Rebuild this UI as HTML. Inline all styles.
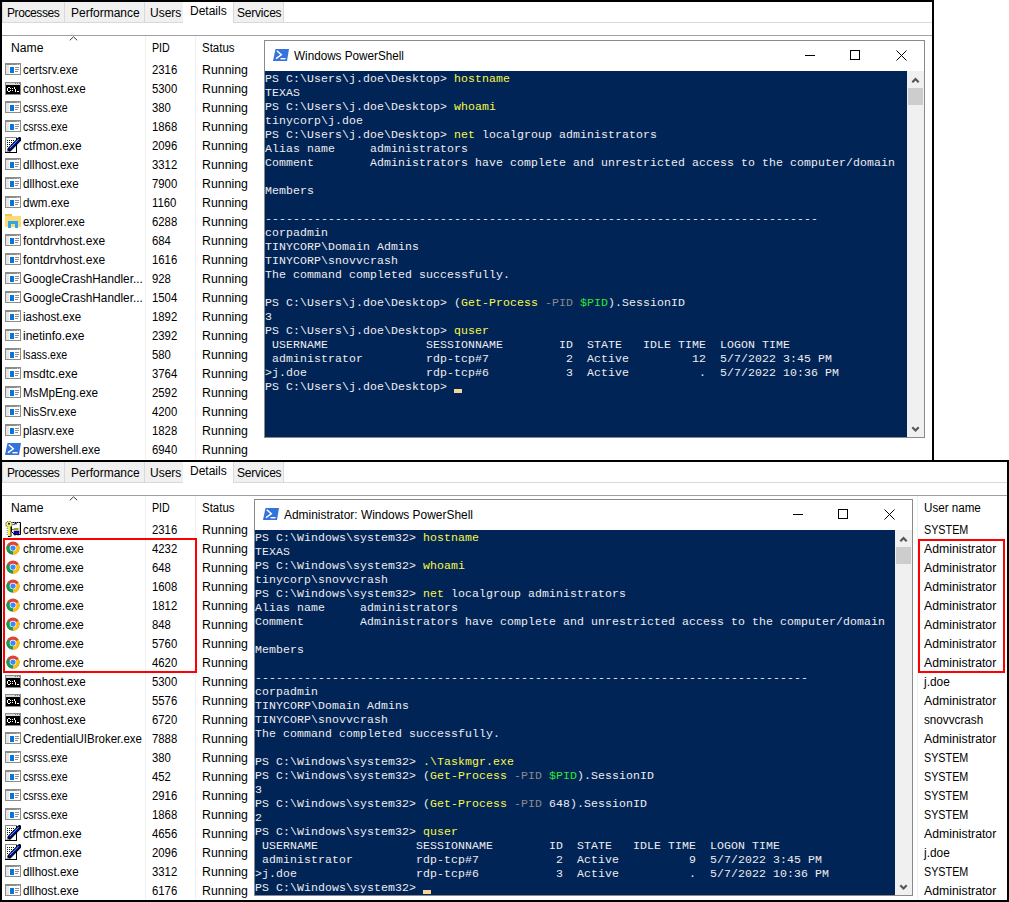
<!DOCTYPE html><html><head><meta charset="utf-8"><style>
html,body{margin:0;padding:0;background:#fff;width:1009px;height:902px;overflow:hidden;position:relative}
.t{position:absolute;font-family:"Liberation Sans", sans-serif;font-size:12px;line-height:19px;height:19px;color:#000;white-space:pre}
.m{position:absolute;left:0;font-family:"Liberation Mono", monospace;font-size:11.5px;letter-spacing:0.1px;line-height:14px;height:14px;color:#eeedf0;white-space:pre}
</style></head><body>

<svg width="0" height="0" style="position:absolute">
<defs>
<symbol id="iwin" viewBox="0 0 16 12">
  <rect x="0" y="0" width="16" height="12" fill="#8c8c8c"/>
  <rect x="1" y="1" width="14" height="10" fill="#fff"/>
  <rect x="1" y="1" width="14" height="1" fill="#8c8c8c"/>
  <rect x="12" y="1" width="1" height="1" fill="#c8c8c8"/><rect x="14" y="1" width="1" height="1" fill="#c8c8c8"/>
  <rect x="1" y="2" width="3" height="9" fill="#e6e6e6"/>
  <rect x="5" y="4" width="4" height="6" fill="#0a74da"/>
  <rect x="10" y="4" width="4" height="1" fill="#8f8f8f"/>
  <rect x="10" y="6" width="4" height="1" fill="#8f8f8f"/>
  <rect x="10" y="8" width="3" height="1" fill="#8f8f8f"/>
</symbol>
<symbol id="icon" viewBox="0 0 16 13">
  <rect x="0" y="0" width="16" height="13" fill="#8c8c8c"/>
  <rect x="1" y="1" width="14" height="2" fill="#d8d8de"/>
  <rect x="10" y="1" width="1" height="1" fill="#777"/><rect x="12" y="1" width="1" height="1" fill="#777"/><rect x="14" y="1" width="1" height="1" fill="#777"/>
  <rect x="1" y="3" width="14" height="9" fill="#000"/>
  <g fill="#fff">
  <rect x="2" y="6" width="1" height="3"/><rect x="3" y="5" width="2" height="1"/><rect x="3" y="9" width="2" height="1"/>
  <rect x="5" y="6" width="1" height="1"/><rect x="5" y="8" width="1" height="1"/>
  <rect x="7" y="6" width="1" height="1"/><rect x="7" y="8" width="1" height="1"/>
  <rect x="9" y="5" width="1" height="2"/><rect x="10" y="7" width="1" height="3"/>
  <rect x="12" y="9" width="2" height="1"/>
  </g>
</symbol>
<symbol id="ips" viewBox="0 0 16 12">
  <path d="M2.5 0 H16 L14 12 H0 Z" fill="#3573dc"/>
  <path d="M3.8 1.8 L8.3 5.8 L3 9.6" fill="none" stroke="#fff" stroke-width="1.5"/>
  <rect x="7.5" y="9" width="5" height="1.4" fill="#fff"/>
</symbol>
<symbol id="ictf" viewBox="0 0 16 16">
  <rect x="0" y="0" width="12" height="16" fill="#000"/>
  <rect x="0" y="0" width="12" height="1" fill="#8a8a8a"/>
  <rect x="0" y="0" width="1" height="15" fill="#8a8a8a"/>
  <rect x="1" y="1" width="10" height="14" fill="#fff"/>
  <g fill="#111">
  <rect x="2" y="3" width="1" height="1"/><rect x="4" y="3" width="1" height="1"/><rect x="6" y="3" width="1" height="1"/><rect x="8" y="3" width="1" height="1"/>
  <rect x="2" y="5" width="1" height="1"/><rect x="4" y="5" width="1" height="1"/><rect x="6" y="5" width="1" height="1"/><rect x="8" y="5" width="1" height="1"/>
  <rect x="2" y="7" width="1" height="1"/><rect x="4" y="7" width="1" height="1"/><rect x="6" y="7" width="1" height="1"/>
  <rect x="2" y="9" width="1" height="1"/>
  </g>
  <path d="M4.5 12.5 L14.5 2.2" stroke="#000" stroke-width="4.2" stroke-linecap="round"/>
  <path d="M4.3 12.2 L14.2 2" stroke="#0a0a9a" stroke-width="2.8"/>
  <path d="M4.8 11.2 L13.6 2.2" stroke="#3cc8f0" stroke-width="0.9"/>
  <path d="M1 15 L3.5 13 L4 14 Z" fill="#222"/>
</symbol>
<symbol id="ifold" viewBox="0 0 16 16">
  <rect x="0" y="1" width="7" height="3" fill="#f1c644"/>
  <rect x="0" y="3" width="16" height="11" fill="#fbd978"/>
  <path d="M3 8 H13 V15 H10 V11 H6 V15 H3 Z" fill="#2ba6e6"/>
</symbol>
<symbol id="ichr" viewBox="0 0 16 16">
  <circle cx="8" cy="8" r="7.5" fill="#db4437"/>
  <path d="M8 8 L14.5 4.25 A7.5 7.5 0 0 1 8 15.5 Z" fill="#f4c20d"/>
  <path d="M8 8 L8 15.5 A7.5 7.5 0 0 1 1.5 4.25 Z" fill="#0f9d58"/>
  <circle cx="8" cy="8" r="3.8" fill="#fff"/>
  <circle cx="8" cy="8" r="3" fill="#4285f4"/>
</symbol>
<symbol id="icert" viewBox="0 0 16 16">
  <path d="M6.5 1.5 H15.5 V13.5 H9.5 L6.5 10.5 Z" fill="#fff" stroke="#000" stroke-width="1"/>
  <path d="M7 1.5 H15" stroke="#777" stroke-width="1" stroke-dasharray="1 1"/>
  <rect x="14" y="3" width="1" height="9" fill="#d8d890"/>
  <rect x="9" y="7" width="4.5" height="2" fill="#a0a020"/>
  <path d="M9 10 H14 V14 H12.5 V12.5 H11 V14 H9 Z" fill="#0000e0" stroke="#000" stroke-width="0.6"/>
  <path d="M8.5 4 Q10 2 12 3" stroke="#1a1a9a" stroke-width="1.2" fill="none"/>
  <circle cx="8" cy="8.5" r="0.7" fill="#111"/>
  <circle cx="4" cy="3.2" r="3.2" fill="#f2f07a" stroke="#222" stroke-width="0.9" stroke-dasharray="1 0.6"/>
  <rect x="2.8" y="6" width="2.8" height="9.5" fill="#f5f050"/>
  <path d="M6 6 V15.5" stroke="#000" stroke-width="1"/>
  <path d="M2.2 7 V14" stroke="#555" stroke-width="0.8" stroke-dasharray="1 1"/>
  <path d="M3 15.5 H5.5" stroke="#000" stroke-width="1"/>
  <circle cx="4" cy="2.8" r="1" fill="#111"/>
</symbol>
</defs>
</svg>

<div style="position:absolute;left:2px;top:2px;width:931px;height:20px;background:#fff"></div>
<div style="position:absolute;left:2px;top:2px;width:63px;height:21px;background:#f0f0f0;border:1px solid #d9d9d9;border-top:0;box-sizing:border-box"></div>
<div class="t" style="left:7px;top:4px;letter-spacing:-0.4px">Processes</div>
<div style="position:absolute;left:64px;top:2px;width:81px;height:21px;background:#f0f0f0;border:1px solid #d9d9d9;border-top:0;box-sizing:border-box"></div>
<div class="t" style="left:71px;top:4px;letter-spacing:0">Performance</div>
<div style="position:absolute;left:144px;top:2px;width:40px;height:21px;background:#f0f0f0;border:1px solid #d9d9d9;border-top:0;box-sizing:border-box"></div>
<div class="t" style="left:150px;top:4px;letter-spacing:0">Users</div>
<div style="position:absolute;left:183px;top:2px;width:50px;height:21px;background:#fff"></div>
<div class="t" style="left:190px;top:2px">Details</div>
<div style="position:absolute;left:233px;top:2px;width:51px;height:21px;background:#f0f0f0;border:1px solid #d9d9d9;border-top:0;box-sizing:border-box"></div>
<div class="t" style="left:237px;top:4px;letter-spacing:-0.2px">Services</div>
<div style="position:absolute;left:283px;top:22px;width:650px;height:1px;background:#d9d9d9"></div>
<div style="position:absolute;left:2px;top:22px;width:181px;height:1px;background:#d9d9d9"></div>
<div style="position:absolute;left:2px;top:35px;width:931px;height:1px;background:#a0a0a0"></div>
<div style="position:absolute;left:145px;top:36px;width:1px;height:424px;background:#f0f0f3"></div>
<div style="position:absolute;left:195px;top:36px;width:1px;height:424px;background:#f0f0f3"></div>
<svg style="position:absolute;left:69px;top:36px" width="9" height="5"><path d="M0.8 4.3 L4.5 0.8 L8.2 4.3" fill="none" stroke="#3a3a3a" stroke-width="1"/></svg>
<div class="t" style="left:11px;top:39px;transform:scaleX(1.0129);transform-origin:0 0;">Name</div>
<div class="t" style="left:152px;top:39px;transform:scaleX(0.8895);transform-origin:0 0;">PID</div>
<div class="t" style="left:202px;top:39px;transform:scaleX(0.9576);transform-origin:0 0;">Status</div>
<svg style="position:absolute;left:5px;top:63px" width="16" height="12"><use href="#iwin" width="16" height="12"/></svg>
<div class="t" style="left:23px;top:61px;transform:scaleX(0.9474);transform-origin:0 0;">certsrv.exe</div>
<div class="t" style="left:152px;top:61px;transform:scaleX(0.9440);transform-origin:0 0;">2316</div>
<div class="t" style="left:201.5px;top:61px;transform:scaleX(1.0279);transform-origin:0 0;">Running</div>
<svg style="position:absolute;left:5px;top:82px" width="16" height="13"><use href="#icon" width="16" height="13"/></svg>
<div class="t" style="left:23px;top:80px;transform:scaleX(0.9672);transform-origin:0 0;">conhost.exe</div>
<div class="t" style="left:152px;top:80px;transform:scaleX(0.9440);transform-origin:0 0;">5300</div>
<div class="t" style="left:201.5px;top:80px;transform:scaleX(1.0279);transform-origin:0 0;">Running</div>
<svg style="position:absolute;left:5px;top:101px" width="16" height="12"><use href="#iwin" width="16" height="12"/></svg>
<div class="t" style="left:23px;top:99px;transform:scaleX(0.8820);transform-origin:0 0;">csrss.exe</div>
<div class="t" style="left:152px;top:99px;transform:scaleX(0.9440);transform-origin:0 0;">380</div>
<div class="t" style="left:201.5px;top:99px;transform:scaleX(1.0279);transform-origin:0 0;">Running</div>
<svg style="position:absolute;left:5px;top:120px" width="16" height="12"><use href="#iwin" width="16" height="12"/></svg>
<div class="t" style="left:23px;top:118px;transform:scaleX(0.8820);transform-origin:0 0;">csrss.exe</div>
<div class="t" style="left:152px;top:118px;transform:scaleX(0.9440);transform-origin:0 0;">1868</div>
<div class="t" style="left:201.5px;top:118px;transform:scaleX(1.0279);transform-origin:0 0;">Running</div>
<svg style="position:absolute;left:5px;top:137px" width="16" height="16"><use href="#ictf" width="16" height="16"/></svg>
<div class="t" style="left:23px;top:137px;">ctfmon.exe</div>
<div class="t" style="left:152px;top:137px;transform:scaleX(0.9440);transform-origin:0 0;">2096</div>
<div class="t" style="left:201.5px;top:137px;transform:scaleX(1.0279);transform-origin:0 0;">Running</div>
<svg style="position:absolute;left:5px;top:158px" width="16" height="12"><use href="#iwin" width="16" height="12"/></svg>
<div class="t" style="left:23px;top:156px;transform:scaleX(0.9702);transform-origin:0 0;">dllhost.exe</div>
<div class="t" style="left:152px;top:156px;transform:scaleX(0.9440);transform-origin:0 0;">3312</div>
<div class="t" style="left:201.5px;top:156px;transform:scaleX(1.0279);transform-origin:0 0;">Running</div>
<svg style="position:absolute;left:5px;top:177px" width="16" height="12"><use href="#iwin" width="16" height="12"/></svg>
<div class="t" style="left:23px;top:175px;transform:scaleX(0.9702);transform-origin:0 0;">dllhost.exe</div>
<div class="t" style="left:152px;top:175px;transform:scaleX(0.9440);transform-origin:0 0;">7900</div>
<div class="t" style="left:201.5px;top:175px;transform:scaleX(1.0279);transform-origin:0 0;">Running</div>
<svg style="position:absolute;left:5px;top:196px" width="16" height="12"><use href="#iwin" width="16" height="12"/></svg>
<div class="t" style="left:23px;top:194px;transform:scaleX(0.9667);transform-origin:0 0;">dwm.exe</div>
<div class="t" style="left:152px;top:194px;transform:scaleX(0.9440);transform-origin:0 0;">1160</div>
<div class="t" style="left:201.5px;top:194px;transform:scaleX(1.0279);transform-origin:0 0;">Running</div>
<svg style="position:absolute;left:5px;top:213px" width="16" height="16"><use href="#ifold" width="16" height="16"/></svg>
<div class="t" style="left:23px;top:213px;transform:scaleX(0.9462);transform-origin:0 0;">explorer.exe</div>
<div class="t" style="left:152px;top:213px;transform:scaleX(0.9440);transform-origin:0 0;">6288</div>
<div class="t" style="left:201.5px;top:213px;transform:scaleX(1.0279);transform-origin:0 0;">Running</div>
<svg style="position:absolute;left:5px;top:234px" width="16" height="12"><use href="#iwin" width="16" height="12"/></svg>
<div class="t" style="left:23px;top:232px;">fontdrvhost.exe</div>
<div class="t" style="left:152px;top:232px;transform:scaleX(0.9440);transform-origin:0 0;">684</div>
<div class="t" style="left:201.5px;top:232px;transform:scaleX(1.0279);transform-origin:0 0;">Running</div>
<svg style="position:absolute;left:5px;top:253px" width="16" height="12"><use href="#iwin" width="16" height="12"/></svg>
<div class="t" style="left:23px;top:251px;">fontdrvhost.exe</div>
<div class="t" style="left:152px;top:251px;transform:scaleX(0.9440);transform-origin:0 0;">1616</div>
<div class="t" style="left:201.5px;top:251px;transform:scaleX(1.0279);transform-origin:0 0;">Running</div>
<svg style="position:absolute;left:5px;top:272px" width="16" height="12"><use href="#iwin" width="16" height="12"/></svg>
<div class="t" style="left:23px;top:270px;transform:scaleX(0.9808);transform-origin:0 0;">GoogleCrashHandler...</div>
<div class="t" style="left:152px;top:270px;transform:scaleX(0.9440);transform-origin:0 0;">928</div>
<div class="t" style="left:201.5px;top:270px;transform:scaleX(1.0279);transform-origin:0 0;">Running</div>
<svg style="position:absolute;left:5px;top:291px" width="16" height="12"><use href="#iwin" width="16" height="12"/></svg>
<div class="t" style="left:23px;top:289px;transform:scaleX(0.9808);transform-origin:0 0;">GoogleCrashHandler...</div>
<div class="t" style="left:152px;top:289px;transform:scaleX(0.9440);transform-origin:0 0;">1504</div>
<div class="t" style="left:201.5px;top:289px;transform:scaleX(1.0279);transform-origin:0 0;">Running</div>
<svg style="position:absolute;left:5px;top:310px" width="16" height="12"><use href="#iwin" width="16" height="12"/></svg>
<div class="t" style="left:23px;top:308px;transform:scaleX(0.9576);transform-origin:0 0;">iashost.exe</div>
<div class="t" style="left:152px;top:308px;transform:scaleX(0.9440);transform-origin:0 0;">1892</div>
<div class="t" style="left:201.5px;top:308px;transform:scaleX(1.0279);transform-origin:0 0;">Running</div>
<svg style="position:absolute;left:5px;top:329px" width="16" height="12"><use href="#iwin" width="16" height="12"/></svg>
<div class="t" style="left:23px;top:327px;">inetinfo.exe</div>
<div class="t" style="left:152px;top:327px;transform:scaleX(0.9440);transform-origin:0 0;">2392</div>
<div class="t" style="left:201.5px;top:327px;transform:scaleX(1.0279);transform-origin:0 0;">Running</div>
<svg style="position:absolute;left:5px;top:348px" width="16" height="12"><use href="#iwin" width="16" height="12"/></svg>
<div class="t" style="left:23px;top:346px;transform:scaleX(0.8837);transform-origin:0 0;">lsass.exe</div>
<div class="t" style="left:152px;top:346px;transform:scaleX(0.9440);transform-origin:0 0;">580</div>
<div class="t" style="left:201.5px;top:346px;transform:scaleX(1.0279);transform-origin:0 0;">Running</div>
<svg style="position:absolute;left:5px;top:367px" width="16" height="12"><use href="#iwin" width="16" height="12"/></svg>
<div class="t" style="left:23px;top:365px;">msdtc.exe</div>
<div class="t" style="left:152px;top:365px;transform:scaleX(0.9440);transform-origin:0 0;">3764</div>
<div class="t" style="left:201.5px;top:365px;transform:scaleX(1.0279);transform-origin:0 0;">Running</div>
<svg style="position:absolute;left:5px;top:386px" width="16" height="12"><use href="#iwin" width="16" height="12"/></svg>
<div class="t" style="left:23px;top:384px;transform:scaleX(0.9787);transform-origin:0 0;">MsMpEng.exe</div>
<div class="t" style="left:152px;top:384px;transform:scaleX(0.9440);transform-origin:0 0;">2592</div>
<div class="t" style="left:201.5px;top:384px;transform:scaleX(1.0279);transform-origin:0 0;">Running</div>
<svg style="position:absolute;left:5px;top:405px" width="16" height="12"><use href="#iwin" width="16" height="12"/></svg>
<div class="t" style="left:23px;top:403px;transform:scaleX(0.9357);transform-origin:0 0;">NisSrv.exe</div>
<div class="t" style="left:152px;top:403px;transform:scaleX(0.9440);transform-origin:0 0;">4200</div>
<div class="t" style="left:201.5px;top:403px;transform:scaleX(1.0279);transform-origin:0 0;">Running</div>
<svg style="position:absolute;left:5px;top:424px" width="16" height="12"><use href="#iwin" width="16" height="12"/></svg>
<div class="t" style="left:23px;top:422px;transform:scaleX(0.9509);transform-origin:0 0;">plasrv.exe</div>
<div class="t" style="left:152px;top:422px;transform:scaleX(0.9440);transform-origin:0 0;">1828</div>
<div class="t" style="left:201.5px;top:422px;transform:scaleX(1.0279);transform-origin:0 0;">Running</div>
<svg style="position:absolute;left:5px;top:443px" width="16" height="12"><use href="#ips" width="16" height="12"/></svg>
<div class="t" style="left:23px;top:441px;transform:scaleX(0.9646);transform-origin:0 0;">powershell.exe</div>
<div class="t" style="left:152px;top:441px;transform:scaleX(0.9440);transform-origin:0 0;">6940</div>
<div class="t" style="left:201.5px;top:441px;transform:scaleX(1.0279);transform-origin:0 0;">Running</div>
<div style="position:absolute;left:264px;top:40px;width:661px;height:398px;box-sizing:border-box;border:1px solid #8a8a8a;background:#fff"></div>
<div style="position:absolute;left:265px;top:71px;width:642px;height:366px;background:#012456;overflow:hidden">
<div class="m" style="top:1px">PS C:\Users\j.doe\Desktop&gt; <span style="color:#f8f848">hostname</span></div>
<div class="m" style="top:15px">TEXAS</div>
<div class="m" style="top:29px">PS C:\Users\j.doe\Desktop&gt; <span style="color:#f8f848">whoami</span></div>
<div class="m" style="top:43px">tinycorp\j.doe</div>
<div class="m" style="top:57px">PS C:\Users\j.doe\Desktop&gt; <span style="color:#f8f848">net</span> localgroup administrators</div>
<div class="m" style="top:71px">Alias name     administrators</div>
<div class="m" style="top:85px">Comment        Administrators have complete and unrestricted access to the computer/domain</div>
<div class="m" style="top:99px"></div>
<div class="m" style="top:113px">Members</div>
<div class="m" style="top:127px"></div>
<div class="m" style="top:141px">-------------------------------------------------------------------------------</div>
<div class="m" style="top:155px">corpadmin</div>
<div class="m" style="top:169px">TINYCORP\Domain Admins</div>
<div class="m" style="top:183px">TINYCORP\snovvcrash</div>
<div class="m" style="top:197px">The command completed successfully.</div>
<div class="m" style="top:211px"></div>
<div class="m" style="top:225px">PS C:\Users\j.doe\Desktop&gt; (<span style="color:#f8f848">Get-Process</span> <span style="color:#8a8a8a">-PID</span> <span style="color:#2ee82e">$PID</span>).SessionID</div>
<div class="m" style="top:239px">3</div>
<div class="m" style="top:253px">PS C:\Users\j.doe\Desktop&gt; <span style="color:#f8f848">quser</span></div>
<div class="m" style="top:267px"> USERNAME              SESSIONNAME        ID  STATE   IDLE TIME  LOGON TIME</div>
<div class="m" style="top:281px"> administrator         rdp-tcp#7           2  Active         12  5/7/2022 3:45 PM</div>
<div class="m" style="top:295px">&gt;j.doe                 rdp-tcp#6           3  Active          .  5/7/2022 10:36 PM</div>
<div class="m" style="top:309px">PS C:\Users\j.doe\Desktop&gt; <span style="display:inline-block;width:8px;height:4px;background:#f6d49a;vertical-align:-3px"></span></div>
</div>
<div style="position:absolute;left:907px;top:71px;width:17px;height:366px;background:#f0f0f0"></div>
<svg style="position:absolute;left:911px;top:77px" width="9" height="6"><path d="M1.3 5.3 L4.5 2.1 L7.7 5.3" fill="none" stroke="#555" stroke-width="2.1"/></svg>
<div style="position:absolute;left:908px;top:88px;width:15px;height:17px;background:#cdcdcd"></div>
<svg style="position:absolute;left:911px;top:426px" width="9" height="7"><path d="M1.3 1.2 L4.5 4.4 L7.7 1.2" fill="none" stroke="#555" stroke-width="2.1"/></svg>
<svg style="position:absolute;left:273px;top:49px" width="16" height="12"><use href="#ips" width="16" height="12"/></svg>
<div class="t" style="left:294px;top:46px;height:21px;line-height:21px;transform:scaleX(0.9750);transform-origin:0 0">Windows PowerShell</div>
<div style="position:absolute;left:805px;top:55px;width:10px;height:1px;background:#000"></div>
<div style="position:absolute;left:850px;top:50px;width:10px;height:10px;box-sizing:border-box;border:1px solid #000"></div>
<svg style="position:absolute;left:896px;top:50px" width="11" height="11"><path d="M0.5 0.5 L10.5 10.5 M10.5 0.5 L0.5 10.5" stroke="#000" stroke-width="1"/></svg>
<div style="position:absolute;left:0;top:0;width:934px;height:2px;background:#000"></div>
<div style="position:absolute;left:0;top:0;width:2px;height:461px;background:#000"></div>
<div style="position:absolute;left:932px;top:0;width:2px;height:461px;background:#000"></div>
<div style="position:absolute;left:934px;top:0;width:75px;height:460px;background:#fff"></div>
<div style="position:absolute;left:0;top:460px;width:1009px;height:442px;background:#fff"></div>
<div style="position:absolute;left:2px;top:462px;width:1005px;height:20px;background:#fff"></div>
<div style="position:absolute;left:2px;top:462px;width:63px;height:21px;background:#f0f0f0;border:1px solid #d9d9d9;border-top:0;box-sizing:border-box"></div>
<div class="t" style="left:7px;top:464px;letter-spacing:-0.4px">Processes</div>
<div style="position:absolute;left:64px;top:462px;width:81px;height:21px;background:#f0f0f0;border:1px solid #d9d9d9;border-top:0;box-sizing:border-box"></div>
<div class="t" style="left:71px;top:464px;letter-spacing:0">Performance</div>
<div style="position:absolute;left:144px;top:462px;width:40px;height:21px;background:#f0f0f0;border:1px solid #d9d9d9;border-top:0;box-sizing:border-box"></div>
<div class="t" style="left:150px;top:464px;letter-spacing:0">Users</div>
<div style="position:absolute;left:183px;top:462px;width:50px;height:21px;background:#fff"></div>
<div class="t" style="left:190px;top:462px">Details</div>
<div style="position:absolute;left:233px;top:462px;width:51px;height:21px;background:#f0f0f0;border:1px solid #d9d9d9;border-top:0;box-sizing:border-box"></div>
<div class="t" style="left:237px;top:464px;letter-spacing:-0.2px">Services</div>
<div style="position:absolute;left:283px;top:482px;width:724px;height:1px;background:#d9d9d9"></div>
<div style="position:absolute;left:2px;top:482px;width:181px;height:1px;background:#d9d9d9"></div>
<div style="position:absolute;left:2px;top:495px;width:1005px;height:1px;background:#a0a0a0"></div>
<div style="position:absolute;left:145px;top:496px;width:1px;height:404px;background:#f0f0f3"></div>
<div style="position:absolute;left:195px;top:496px;width:1px;height:404px;background:#f0f0f3"></div>
<div style="position:absolute;left:917px;top:496px;width:1px;height:404px;background:#f0f0f3"></div>
<svg style="position:absolute;left:69px;top:496px" width="9" height="5"><path d="M0.8 4.3 L4.5 0.8 L8.2 4.3" fill="none" stroke="#3a3a3a" stroke-width="1"/></svg>
<div class="t" style="left:11px;top:499px;transform:scaleX(1.0129);transform-origin:0 0;">Name</div>
<div class="t" style="left:152px;top:499px;transform:scaleX(0.8895);transform-origin:0 0;">PID</div>
<div class="t" style="left:202px;top:499px;transform:scaleX(0.9576);transform-origin:0 0;">Status</div>
<div class="t" style="left:924px;top:499px;transform:scaleX(0.9684);transform-origin:0 0;">User name</div>
<svg style="position:absolute;left:5px;top:521px" width="16" height="16"><use href="#icert" width="16" height="16"/></svg>
<div class="t" style="left:23px;top:521px;transform:scaleX(0.9474);transform-origin:0 0;">certsrv.exe</div>
<div class="t" style="left:152px;top:521px;transform:scaleX(0.9440);transform-origin:0 0;">2316</div>
<div class="t" style="left:201.5px;top:521px;transform:scaleX(1.0279);transform-origin:0 0;">Running</div>
<div class="t" style="left:924px;top:521px;transform:scaleX(0.8979);transform-origin:0 0;">SYSTEM</div>
<svg style="position:absolute;left:6px;top:541px" width="14" height="14"><use href="#ichr" width="14" height="14"/></svg>
<div class="t" style="left:23px;top:540px;transform:scaleX(0.9677);transform-origin:0 0;">chrome.exe</div>
<div class="t" style="left:152px;top:540px;transform:scaleX(0.9440);transform-origin:0 0;">4232</div>
<div class="t" style="left:201.5px;top:540px;transform:scaleX(1.0279);transform-origin:0 0;">Running</div>
<div class="t" style="left:924px;top:540px;transform:scaleX(1.0225);transform-origin:0 0;">Administrator</div>
<svg style="position:absolute;left:6px;top:560px" width="14" height="14"><use href="#ichr" width="14" height="14"/></svg>
<div class="t" style="left:23px;top:559px;transform:scaleX(0.9677);transform-origin:0 0;">chrome.exe</div>
<div class="t" style="left:152px;top:559px;transform:scaleX(0.9440);transform-origin:0 0;">648</div>
<div class="t" style="left:201.5px;top:559px;transform:scaleX(1.0279);transform-origin:0 0;">Running</div>
<div class="t" style="left:924px;top:559px;transform:scaleX(1.0225);transform-origin:0 0;">Administrator</div>
<svg style="position:absolute;left:6px;top:579px" width="14" height="14"><use href="#ichr" width="14" height="14"/></svg>
<div class="t" style="left:23px;top:578px;transform:scaleX(0.9677);transform-origin:0 0;">chrome.exe</div>
<div class="t" style="left:152px;top:578px;transform:scaleX(0.9440);transform-origin:0 0;">1608</div>
<div class="t" style="left:201.5px;top:578px;transform:scaleX(1.0279);transform-origin:0 0;">Running</div>
<div class="t" style="left:924px;top:578px;transform:scaleX(1.0225);transform-origin:0 0;">Administrator</div>
<svg style="position:absolute;left:6px;top:598px" width="14" height="14"><use href="#ichr" width="14" height="14"/></svg>
<div class="t" style="left:23px;top:597px;transform:scaleX(0.9677);transform-origin:0 0;">chrome.exe</div>
<div class="t" style="left:152px;top:597px;transform:scaleX(0.9440);transform-origin:0 0;">1812</div>
<div class="t" style="left:201.5px;top:597px;transform:scaleX(1.0279);transform-origin:0 0;">Running</div>
<div class="t" style="left:924px;top:597px;transform:scaleX(1.0225);transform-origin:0 0;">Administrator</div>
<svg style="position:absolute;left:6px;top:617px" width="14" height="14"><use href="#ichr" width="14" height="14"/></svg>
<div class="t" style="left:23px;top:616px;transform:scaleX(0.9677);transform-origin:0 0;">chrome.exe</div>
<div class="t" style="left:152px;top:616px;transform:scaleX(0.9440);transform-origin:0 0;">848</div>
<div class="t" style="left:201.5px;top:616px;transform:scaleX(1.0279);transform-origin:0 0;">Running</div>
<div class="t" style="left:924px;top:616px;transform:scaleX(1.0225);transform-origin:0 0;">Administrator</div>
<svg style="position:absolute;left:6px;top:636px" width="14" height="14"><use href="#ichr" width="14" height="14"/></svg>
<div class="t" style="left:23px;top:635px;transform:scaleX(0.9677);transform-origin:0 0;">chrome.exe</div>
<div class="t" style="left:152px;top:635px;transform:scaleX(0.9440);transform-origin:0 0;">5760</div>
<div class="t" style="left:201.5px;top:635px;transform:scaleX(1.0279);transform-origin:0 0;">Running</div>
<div class="t" style="left:924px;top:635px;transform:scaleX(1.0225);transform-origin:0 0;">Administrator</div>
<svg style="position:absolute;left:6px;top:655px" width="14" height="14"><use href="#ichr" width="14" height="14"/></svg>
<div class="t" style="left:23px;top:654px;transform:scaleX(0.9677);transform-origin:0 0;">chrome.exe</div>
<div class="t" style="left:152px;top:654px;transform:scaleX(0.9440);transform-origin:0 0;">4620</div>
<div class="t" style="left:201.5px;top:654px;transform:scaleX(1.0279);transform-origin:0 0;">Running</div>
<div class="t" style="left:924px;top:654px;transform:scaleX(1.0225);transform-origin:0 0;">Administrator</div>
<svg style="position:absolute;left:5px;top:675px" width="16" height="13"><use href="#icon" width="16" height="13"/></svg>
<div class="t" style="left:23px;top:673px;transform:scaleX(0.9672);transform-origin:0 0;">conhost.exe</div>
<div class="t" style="left:152px;top:673px;transform:scaleX(0.9440);transform-origin:0 0;">5300</div>
<div class="t" style="left:201.5px;top:673px;transform:scaleX(1.0279);transform-origin:0 0;">Running</div>
<div class="t" style="left:924px;top:673px;transform:scaleX(0.9885);transform-origin:0 0;">j.doe</div>
<svg style="position:absolute;left:5px;top:694px" width="16" height="13"><use href="#icon" width="16" height="13"/></svg>
<div class="t" style="left:23px;top:692px;transform:scaleX(0.9672);transform-origin:0 0;">conhost.exe</div>
<div class="t" style="left:152px;top:692px;transform:scaleX(0.9440);transform-origin:0 0;">5576</div>
<div class="t" style="left:201.5px;top:692px;transform:scaleX(1.0279);transform-origin:0 0;">Running</div>
<div class="t" style="left:924px;top:692px;transform:scaleX(1.0225);transform-origin:0 0;">Administrator</div>
<svg style="position:absolute;left:5px;top:713px" width="16" height="13"><use href="#icon" width="16" height="13"/></svg>
<div class="t" style="left:23px;top:711px;transform:scaleX(0.9672);transform-origin:0 0;">conhost.exe</div>
<div class="t" style="left:152px;top:711px;transform:scaleX(0.9440);transform-origin:0 0;">6720</div>
<div class="t" style="left:201.5px;top:711px;transform:scaleX(1.0279);transform-origin:0 0;">Running</div>
<div class="t" style="left:924px;top:711px;transform:scaleX(0.9750);transform-origin:0 0;">snovvcrash</div>
<svg style="position:absolute;left:5px;top:732px" width="16" height="12"><use href="#iwin" width="16" height="12"/></svg>
<div class="t" style="left:23px;top:730px;transform:scaleX(0.9593);transform-origin:0 0;">CredentialUIBroker.exe</div>
<div class="t" style="left:152px;top:730px;transform:scaleX(0.9440);transform-origin:0 0;">7888</div>
<div class="t" style="left:201.5px;top:730px;transform:scaleX(1.0279);transform-origin:0 0;">Running</div>
<div class="t" style="left:924px;top:730px;transform:scaleX(1.0225);transform-origin:0 0;">Administrator</div>
<svg style="position:absolute;left:5px;top:751px" width="16" height="12"><use href="#iwin" width="16" height="12"/></svg>
<div class="t" style="left:23px;top:749px;transform:scaleX(0.8820);transform-origin:0 0;">csrss.exe</div>
<div class="t" style="left:152px;top:749px;transform:scaleX(0.9440);transform-origin:0 0;">380</div>
<div class="t" style="left:201.5px;top:749px;transform:scaleX(1.0279);transform-origin:0 0;">Running</div>
<div class="t" style="left:924px;top:749px;transform:scaleX(0.8979);transform-origin:0 0;">SYSTEM</div>
<svg style="position:absolute;left:5px;top:770px" width="16" height="12"><use href="#iwin" width="16" height="12"/></svg>
<div class="t" style="left:23px;top:768px;transform:scaleX(0.8820);transform-origin:0 0;">csrss.exe</div>
<div class="t" style="left:152px;top:768px;transform:scaleX(0.9440);transform-origin:0 0;">452</div>
<div class="t" style="left:201.5px;top:768px;transform:scaleX(1.0279);transform-origin:0 0;">Running</div>
<div class="t" style="left:924px;top:768px;transform:scaleX(0.8979);transform-origin:0 0;">SYSTEM</div>
<svg style="position:absolute;left:5px;top:789px" width="16" height="12"><use href="#iwin" width="16" height="12"/></svg>
<div class="t" style="left:23px;top:787px;transform:scaleX(0.8820);transform-origin:0 0;">csrss.exe</div>
<div class="t" style="left:152px;top:787px;transform:scaleX(0.9440);transform-origin:0 0;">2916</div>
<div class="t" style="left:201.5px;top:787px;transform:scaleX(1.0279);transform-origin:0 0;">Running</div>
<div class="t" style="left:924px;top:787px;transform:scaleX(0.8979);transform-origin:0 0;">SYSTEM</div>
<svg style="position:absolute;left:5px;top:808px" width="16" height="12"><use href="#iwin" width="16" height="12"/></svg>
<div class="t" style="left:23px;top:806px;transform:scaleX(0.8820);transform-origin:0 0;">csrss.exe</div>
<div class="t" style="left:152px;top:806px;transform:scaleX(0.9440);transform-origin:0 0;">1868</div>
<div class="t" style="left:201.5px;top:806px;transform:scaleX(1.0279);transform-origin:0 0;">Running</div>
<div class="t" style="left:924px;top:806px;transform:scaleX(0.8979);transform-origin:0 0;">SYSTEM</div>
<svg style="position:absolute;left:5px;top:825px" width="16" height="16"><use href="#ictf" width="16" height="16"/></svg>
<div class="t" style="left:23px;top:825px;">ctfmon.exe</div>
<div class="t" style="left:152px;top:825px;transform:scaleX(0.9440);transform-origin:0 0;">4656</div>
<div class="t" style="left:201.5px;top:825px;transform:scaleX(1.0279);transform-origin:0 0;">Running</div>
<div class="t" style="left:924px;top:825px;transform:scaleX(1.0225);transform-origin:0 0;">Administrator</div>
<svg style="position:absolute;left:5px;top:844px" width="16" height="16"><use href="#ictf" width="16" height="16"/></svg>
<div class="t" style="left:23px;top:844px;">ctfmon.exe</div>
<div class="t" style="left:152px;top:844px;transform:scaleX(0.9440);transform-origin:0 0;">2096</div>
<div class="t" style="left:201.5px;top:844px;transform:scaleX(1.0279);transform-origin:0 0;">Running</div>
<div class="t" style="left:924px;top:844px;transform:scaleX(0.9885);transform-origin:0 0;">j.doe</div>
<svg style="position:absolute;left:5px;top:865px" width="16" height="12"><use href="#iwin" width="16" height="12"/></svg>
<div class="t" style="left:23px;top:863px;transform:scaleX(0.9702);transform-origin:0 0;">dllhost.exe</div>
<div class="t" style="left:152px;top:863px;transform:scaleX(0.9440);transform-origin:0 0;">3312</div>
<div class="t" style="left:201.5px;top:863px;transform:scaleX(1.0279);transform-origin:0 0;">Running</div>
<div class="t" style="left:924px;top:863px;transform:scaleX(0.8979);transform-origin:0 0;">SYSTEM</div>
<svg style="position:absolute;left:5px;top:884px" width="16" height="12"><use href="#iwin" width="16" height="12"/></svg>
<div class="t" style="left:23px;top:882px;transform:scaleX(0.9702);transform-origin:0 0;">dllhost.exe</div>
<div class="t" style="left:152px;top:882px;transform:scaleX(0.9440);transform-origin:0 0;">6176</div>
<div class="t" style="left:201.5px;top:882px;transform:scaleX(1.0279);transform-origin:0 0;">Running</div>
<div class="t" style="left:924px;top:882px;transform:scaleX(1.0225);transform-origin:0 0;">Administrator</div>
<div style="position:absolute;left:254px;top:499px;width:659px;height:397px;box-sizing:border-box;border:1px solid #8a8a8a;background:#fff"></div>
<div style="position:absolute;left:255px;top:530px;width:640px;height:365px;background:#012456;overflow:hidden">
<div class="m" style="top:1px">PS C:\Windows\system32&gt; <span style="color:#f8f848">hostname</span></div>
<div class="m" style="top:15px">TEXAS</div>
<div class="m" style="top:29px">PS C:\Windows\system32&gt; <span style="color:#f8f848">whoami</span></div>
<div class="m" style="top:43px">tinycorp\snovvcrash</div>
<div class="m" style="top:57px">PS C:\Windows\system32&gt; <span style="color:#f8f848">net</span> localgroup administrators</div>
<div class="m" style="top:71px">Alias name     administrators</div>
<div class="m" style="top:85px">Comment        Administrators have complete and unrestricted access to the computer/domain</div>
<div class="m" style="top:99px"></div>
<div class="m" style="top:113px">Members</div>
<div class="m" style="top:127px"></div>
<div class="m" style="top:141px">-------------------------------------------------------------------------------</div>
<div class="m" style="top:155px">corpadmin</div>
<div class="m" style="top:169px">TINYCORP\Domain Admins</div>
<div class="m" style="top:183px">TINYCORP\snovvcrash</div>
<div class="m" style="top:197px">The command completed successfully.</div>
<div class="m" style="top:211px"></div>
<div class="m" style="top:225px">PS C:\Windows\system32&gt; <span style="color:#f8f848">.\Taskmgr.exe</span></div>
<div class="m" style="top:239px">PS C:\Windows\system32&gt; (<span style="color:#f8f848">Get-Process</span> <span style="color:#8a8a8a">-PID</span> <span style="color:#2ee82e">$PID</span>).SessionID</div>
<div class="m" style="top:253px">3</div>
<div class="m" style="top:267px">PS C:\Windows\system32&gt; (<span style="color:#f8f848">Get-Process</span> <span style="color:#8a8a8a">-PID</span> 648).SessionID</div>
<div class="m" style="top:281px">2</div>
<div class="m" style="top:295px">PS C:\Windows\system32&gt; <span style="color:#f8f848">quser</span></div>
<div class="m" style="top:309px"> USERNAME              SESSIONNAME        ID  STATE   IDLE TIME  LOGON TIME</div>
<div class="m" style="top:323px"> administrator         rdp-tcp#7           2  Active          9  5/7/2022 3:45 PM</div>
<div class="m" style="top:337px">&gt;j.doe                 rdp-tcp#6           3  Active          .  5/7/2022 10:36 PM</div>
<div class="m" style="top:351px">PS C:\Windows\system32&gt; <span style="display:inline-block;width:8px;height:4px;background:#f6d49a;vertical-align:-3px"></span></div>
</div>
<div style="position:absolute;left:895px;top:530px;width:17px;height:365px;background:#f0f0f0"></div>
<svg style="position:absolute;left:899px;top:536px" width="9" height="6"><path d="M1.3 5.3 L4.5 2.1 L7.7 5.3" fill="none" stroke="#555" stroke-width="2.1"/></svg>
<div style="position:absolute;left:896px;top:547px;width:15px;height:17px;background:#cdcdcd"></div>
<svg style="position:absolute;left:899px;top:884px" width="9" height="7"><path d="M1.3 1.2 L4.5 4.4 L7.7 1.2" fill="none" stroke="#555" stroke-width="2.1"/></svg>
<svg style="position:absolute;left:263px;top:508px" width="16" height="12"><use href="#ips" width="16" height="12"/></svg>
<div class="t" style="left:284px;top:505px;height:21px;line-height:21px;transform:scaleX(0.9942);transform-origin:0 0">Administrator: Windows PowerShell</div>
<div style="position:absolute;left:793px;top:514px;width:10px;height:1px;background:#000"></div>
<div style="position:absolute;left:838px;top:509px;width:10px;height:10px;box-sizing:border-box;border:1px solid #000"></div>
<svg style="position:absolute;left:884px;top:509px" width="11" height="11"><path d="M0.5 0.5 L10.5 10.5 M10.5 0.5 L0.5 10.5" stroke="#000" stroke-width="1"/></svg>
<div style="position:absolute;left:3px;top:538px;width:194px;height:135px;box-sizing:border-box;border:2px solid #ff0000"></div>
<div style="position:absolute;left:918px;top:539px;width:87px;height:134px;box-sizing:border-box;border:2px solid #ff0000"></div>
<div style="position:absolute;left:0;top:460px;width:1009px;height:2px;background:#000"></div>
<div style="position:absolute;left:0;top:460px;width:2px;height:442px;background:#000"></div>
<div style="position:absolute;left:1007px;top:460px;width:2px;height:442px;background:#000"></div>
<div style="position:absolute;left:0;top:900px;width:1009px;height:2px;background:#000"></div>
</body></html>
